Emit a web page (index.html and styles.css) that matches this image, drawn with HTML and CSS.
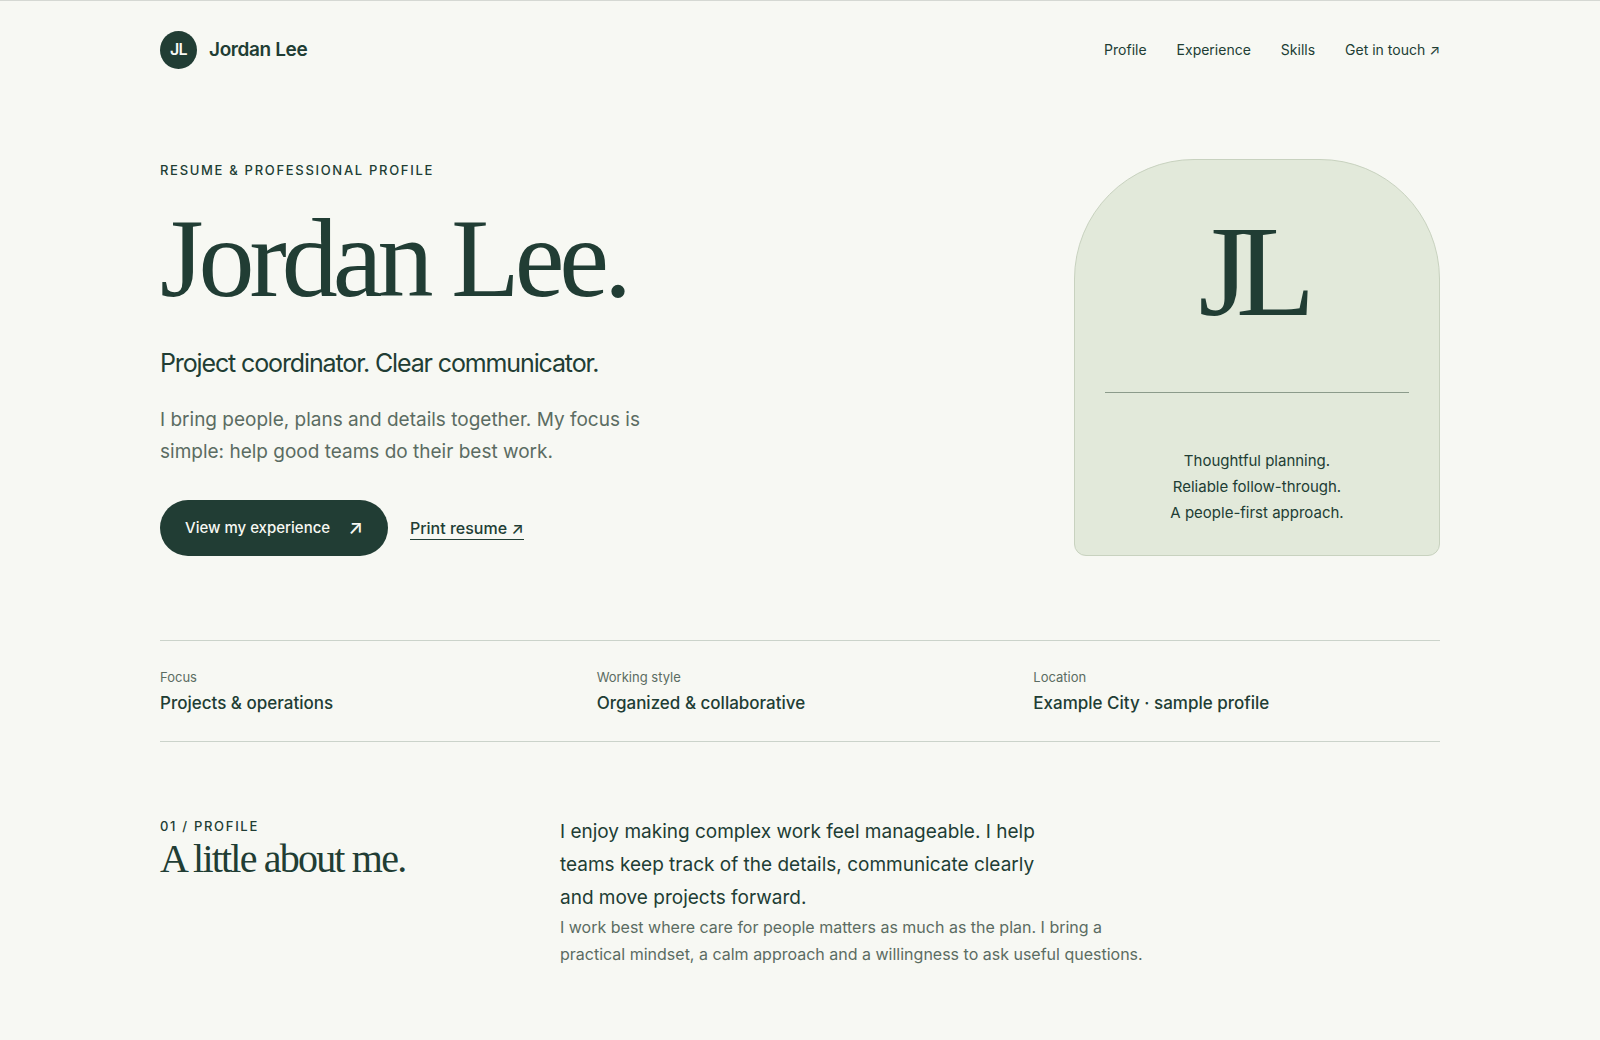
FILE: index.html
```html
<!DOCTYPE html>
<html lang="en">
<head>
<meta charset="UTF-8">
<meta name="viewport" content="width=device-width, initial-scale=1">
<title>Jordan Lee | Resume</title>
<link rel="stylesheet" href="styles.css">
</head>
<body>

<header class="site-header wrap">
  <a class="brand" href="#top"><span class="brand-mark">JL</span>Jordan Lee</a>
  <nav class="site-nav" aria-label="Main">
    <a href="#profile">Profile</a>
    <a href="#experience">Experience</a>
    <a href="#skills">Skills</a>
    <a href="#contact">Get in touch ↗</a>
  </nav>
</header>

<main id="top" class="wrap">
  <section class="hero">
    <div class="hero-copy">
      <p class="eyebrow">Resume &amp; professional profile</p>
      <h1>Jordan Lee.</h1>
      <p class="role">Project coordinator. Clear communicator.</p>
      <p class="intro">I bring people, plans and details together. My focus is simple: help good teams do their best work.</p>
      <div class="actions">
        <a class="button" href="#experience">View my experience <span>↗</span></a>
        <button class="text-link" type="button">Print resume ↗</button>
      </div>
    </div>
    <aside class="portrait">
      <div class="monogram">JL</div>
      <p class="portrait-note">Thoughtful planning.<br>Reliable follow-through.<br>A people-first approach.</p>
    </aside>
  </section>

  <dl class="facts">
    <div><dt>Focus</dt><dd>Projects &amp; operations</dd></div>
    <div><dt>Working style</dt><dd>Organized &amp; collaborative</dd></div>
    <div><dt>Location</dt><dd>Example City · sample profile</dd></div>
  </dl>

  <section id="profile" class="section">
    <div>
      <p class="eyebrow">01 / Profile</p>
      <h2>A little about me.</h2>
    </div>
    <div class="about">
      <p class="lead">I enjoy making complex work feel manageable. I help teams keep track of the details, communicate clearly and move projects forward.</p>
      <p class="muted">I work best where care for people matters as much as the plan. I bring a practical mindset, a calm approach and a willingness to ask useful questions.</p>
    </div>
  </section>
</main>

</body>
</html>
```
FILE: styles.css
```css
:root {
  --ink: #213d34;
  --muted: #5b6c62;
  --paper: #f7f8f3;
  --sage: #e2e9da;
  --line: #cbd3ca;
}

* { box-sizing: border-box; }

body {
  margin: 0;
  border-top: 1px solid #d5d8d3;
  background: var(--paper);
  color: var(--ink);
  font: 16px/1.6 Inter, sans-serif;
}

h1, h2, p, dl, dd { margin: 0; }
a { color: inherit; text-decoration: none; }

.wrap { width: 80%; max-width: 1280px; margin: 0 auto; }

.site-header {
  display: flex;
  justify-content: space-between;
  align-items: center;
  padding: 30px 0;
}

.brand {
  display: flex;
  align-items: center;
  gap: 12px;
  font-size: 19px;
  font-weight: 600;
  letter-spacing: -0.02em;
}

.brand-mark {
  display: grid;
  place-items: center;
  width: 37px;
  height: 38px;
  border-radius: 50%;
  background: var(--ink);
  color: var(--paper);
  font-size: 16px;
  letter-spacing: -0.04em;
}

.site-nav { display: flex; gap: 30px; font-size: 14px; }

.hero {
  display: flex;
  justify-content: space-between;
  padding: 60px 0 84px;
}

.eyebrow {
  font-size: 13px;
  font-weight: 500;
  line-height: 23px;
  letter-spacing: 0.13em;
  text-transform: uppercase;
}

h1, h2, .monogram {
  font-family: "Liberation Serif", serif;
  font-weight: 400;
}

h1 {
  margin: 18px 0 26px;
  font-size: 112px;
  line-height: 116px;
  letter-spacing: -0.045em;
}

.role { font-size: 25px; line-height: 42px; letter-spacing: -0.045em; }

.intro {
  max-width: 510px;
  margin: 20px 0 32px;
  color: var(--muted);
  font-size: 19px;
  line-height: 32px;
}

.actions { display: flex; align-items: center; gap: 22px; }

.button {
  display: flex;
  align-items: center;
  gap: 18px;
  padding: 12px 25px;
  border-radius: 28px;
  background: var(--ink);
  color: var(--paper);
  font-size: 15px;
  font-weight: 500;
}

.button span { font-size: 19px; line-height: 32px; }

.text-link {
  padding: 0;
  border: 0;
  border-bottom: 1px solid var(--ink);
  background: none;
  color: inherit;
  font: 500 16px/22px Inter, sans-serif;
  cursor: pointer;
}

.portrait {
  width: 366px;
  padding: 44px 30px 28px;
  border: 1px solid #c8d2bf;
  border-radius: 120px 120px 12px 12px;
  background: var(--sage);
  text-align: center;
}

.monogram {
  /* right padding evens out the negative tracking after the L */
  padding: 0 13px 54px 0;
  border-bottom: 1px solid #8c9b8b;
  font-size: 130px;
  line-height: 134px;
  letter-spacing: -0.1em;
}

.portrait-note { padding-top: 55px; font-size: 15px; line-height: 26px; }

.facts {
  display: grid;
  grid-template-columns: repeat(3, 1fr);
  gap: 30px;
  padding: 24px 0;
  border-top: 1px solid var(--line);
  border-bottom: 1px solid var(--line);
}

.facts dt { color: var(--muted); font-size: 13px; line-height: 24px; }
.facts dd { font-size: 17px; font-weight: 500; line-height: 28px; }

.section {
  display: grid;
  grid-template-columns: 320px 1fr;
  gap: 80px;
  padding: 73px 0 80px;
}

h2 { font-size: 40px; line-height: 42px; letter-spacing: -0.045em; }

.lead { max-width: 500px; font-size: 19px; line-height: 33px; }
.muted { max-width: 600px; color: var(--muted); font-size: 16px; line-height: 27px; }
```
